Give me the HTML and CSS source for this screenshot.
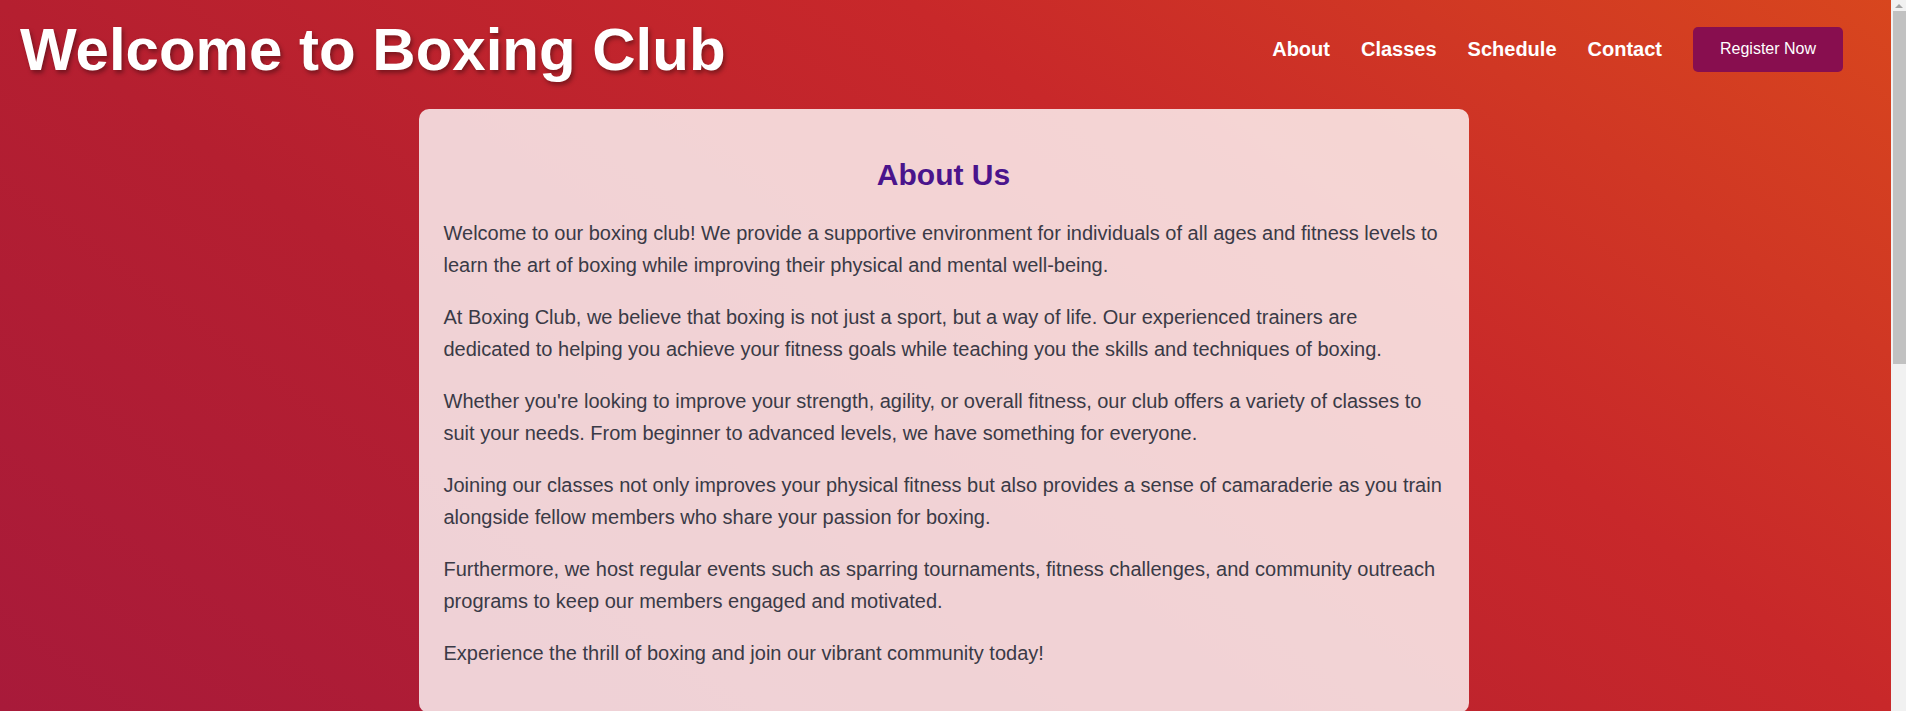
FILE: index.html
```html
<!DOCTYPE html>
<html lang="en">
<head>
<meta charset="utf-8">
<title>Boxing Club</title>
<link rel="stylesheet" href="styles.css">
</head>
<body>
<div class="page">
  <header class="site-header">
    <h1 class="site-title">Welcome to Boxing Club</h1>
    <nav class="site-nav">
      <a class="nav-link" href="#about">About</a>
      <a class="nav-link" href="#classes">Classes</a>
      <a class="nav-link" href="#schedule">Schedule</a>
      <a class="nav-link" href="#contact">Contact</a>
      <a class="register-btn" href="#register">Register Now</a>
    </nav>
  </header>
  <main class="main">
    <section class="card" id="about">
      <h2 class="card-title">About Us</h2>
      <p class="card-text">Welcome to our boxing club! We provide a supportive environment for individuals of all ages and fitness levels to learn the art of boxing while improving their physical and mental well-being.</p>
      <p class="card-text">At Boxing Club, we believe that boxing is not just a sport, but a way of life. Our experienced trainers are dedicated to helping you achieve your fitness goals while teaching you the skills and techniques of boxing.</p>
      <p class="card-text">Whether you're looking to improve your strength, agility, or overall fitness, our club offers a variety of classes to suit your needs. From beginner to advanced levels, we have something for everyone.</p>
      <p class="card-text">Joining our classes not only improves your physical fitness but also provides a sense of camaraderie as you train alongside fellow members who share your passion for boxing.</p>
      <p class="card-text">Furthermore, we host regular events such as sparring tournaments, fitness challenges, and community outreach programs to keep our members engaged and motivated.</p>
      <p class="card-text">Experience the thrill of boxing and join our vibrant community today!</p>
    </section>
  </main>
</div>
<div class="scrollbar" aria-hidden="true">
  <div class="scroll-arrow"></div>
  <div class="scroll-thumb"></div>
</div>
</body>
</html>
```

FILE: styles.css
```css
html, body {
  margin: 0;
  padding: 0;
}

body {
  font-family: "Liberation Sans", Arial, sans-serif;
  color: #3a3a46;
  background: #f1f1f1;
}

.page {
  display: flex;
  flex-direction: column;
  width: calc(100% - 15px);
  min-height: 1363px;
  background: linear-gradient(to top right, #9c1543 0%, #a81a3a 24%, #b51f30 50%, #c8282a 74%, #d8461e 100%);
}

.site-header {
  display: flex;
  align-items: center;
  justify-content: space-between;
  padding: 15px 48px 17px 20px;
}

.site-title {
  margin: 0;
  font-size: 60px;
  font-weight: bold;
  line-height: 69px;
  color: #fff;
  text-shadow: 2px 3px 4px rgba(0, 0, 0, 0.35);
}

.site-nav {
  display: flex;
  align-items: center;
  gap: 31px;
}

.nav-link {
  color: #fff;
  font-size: 20px;
  font-weight: bold;
  text-decoration: none;
}

.register-btn {
  display: inline-block;
  background: #880e4f;
  color: #fff;
  font-size: 16px;
  line-height: 18px;
  padding: 13px 27px 14px;
  border-radius: 5px;
  text-decoration: none;
}

.main {
  display: flex;
  justify-content: center;
  padding: 8px 4px 0 0;
}

.card {
  box-sizing: border-box;
  width: 1050px;
  padding: 24px 25px;
  background: rgba(255, 255, 255, 0.8);
  border-radius: 10px;
}

.card-title {
  text-align: center;
  font-size: 30px;
  font-weight: bold;
  color: #4a148c;
  margin: 25px 0;
}

.card-text {
  font-size: 20px;
  line-height: 32px;
  margin: 20px 0;
  color: #3a3a46;
}

.scrollbar {
  position: fixed;
  top: 0;
  right: 0;
  width: 15px;
  height: 100%;
  background: #f1f1f1;
}

.scroll-arrow {
  margin: 4px auto 0;
  width: 0;
  height: 0;
  border-left: 4px solid transparent;
  border-right: 4px solid transparent;
  border-bottom: 4px solid #a3a3a3;
}

.scroll-thumb {
  position: absolute;
  top: 11px;
  left: 2px;
  right: 0;
  height: 353px;
  background: #c1c1c1;
}
```
